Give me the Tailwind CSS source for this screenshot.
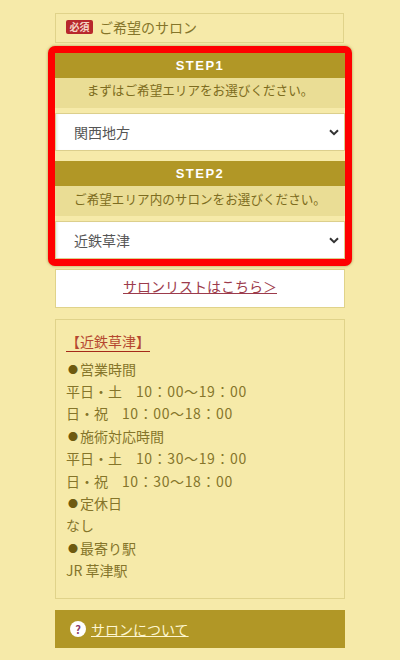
<!DOCTYPE html>
<html lang="ja">
  <head>
    <meta charset="UTF-8" />
    <title>サロン</title>
    <script src="https://cdn.jsdelivr.net/npm/@tailwindcss/browser@4"></script>
  </head>
  <body class="bg-[#f6eaa9] h-[660px] overflow-hidden font-['Noto_Sans_CJK_JP',sans-serif] text-[14px] text-[#85752a]">
    <div class="w-[290px] ml-[55px] pt-[13px]">
      <!-- 見出し -->
      <div class="flex items-center h-[30px] w-[289px] pl-[10px] pb-[2px] border border-[#e0d38a]">
        <span class="flex items-center justify-center w-[27px] h-[14px] rounded-[2px] bg-[#b8282c] text-[#f5d5c5] text-[10px] font-bold leading-none">必須</span>
        <span class="ml-[6px] text-[14px]">ご希望のサロン</span>
      </div>

      <!-- STEP -->
      <div class="-mx-[7px] mt-[3px] w-[304px] border-[7px] border-[#ff0000] rounded-[7px] bg-[#f6eaa9] shadow-[0_0_3px_rgba(120,100,20,0.6)]">
        <div class="h-[25px] bg-[#b19726] text-center text-white font-bold text-[13px] leading-[25px] tracking-[1.5px] font-['Liberation_Sans',sans-serif]">STEP1</div>
        <div class="h-[30px] bg-[#eadd95] text-center text-[12.6px] text-[#7d6c20] leading-[24px]">まずはご希望エリアをお選びください。</div>
        <div class="mt-[5px] flex items-center justify-between h-[38px] bg-white border border-[#dccf8c] pl-[18px] pr-[5px] text-[#555] shadow-[inset_3px_0_3px_-2px_rgba(0,0,0,0.12)]">
          <span>関西地方</span>
          <svg width="10" height="7" viewBox="0 0 10 7"><path d="M1 1.2l4 4 4-4" fill="none" stroke="#333" stroke-width="2" /></svg>
        </div>
        <div class="mt-[10px] h-[25px] bg-[#b19726] text-center text-white font-bold text-[13px] leading-[25px] tracking-[1.5px] font-['Liberation_Sans',sans-serif]">STEP2</div>
        <div class="h-[30px] bg-[#eadd95] text-center text-[12.6px] text-[#7d6c20] leading-[26px]">ご希望エリア内のサロンをお選びください。</div>
        <div class="mt-[5px] flex items-center justify-between h-[38px] bg-white border border-[#dccf8c] pl-[18px] pr-[5px] text-[#555] shadow-[inset_3px_0_3px_-2px_rgba(0,0,0,0.12)]">
          <span>近鉄草津</span>
          <svg width="10" height="7" viewBox="0 0 10 7"><path d="M1 1.2l4 4 4-4" fill="none" stroke="#333" stroke-width="2" /></svg>
        </div>
      </div>

      <!-- サロンリスト -->
      <div class="mt-[3px] h-[39px] bg-white border border-[#e0d38a] text-center leading-[33px] text-[#9c3b4c]">
        <a href="#" class="underline">サロンリストはこちら＞</a>
      </div>

      <!-- サロン情報 -->
      <div class="mt-[11px] h-[280px] border border-[#e0d38a] px-[10px] pt-[11px]">
        <p class="inline-block border-b border-[#a52a1a] text-[#b5472f] leading-[20px]">【近鉄草津】</p>
        <div class="mt-[6px] grid auto-rows-[22.4px] items-center">
          <p class="flex items-center"><span class="w-[14px] text-center text-[10px] text-[#6e5a10]">●</span>営業時間</p>
          <p>平日・土　<span class="tracking-[0.6px]">10：00～19：00</span></p>
          <p>日・祝　<span class="tracking-[0.6px]">10：00～18：00</span></p>
          <p class="flex items-center"><span class="w-[14px] text-center text-[10px] text-[#6e5a10]">●</span>施術対応時間</p>
          <p>平日・土　<span class="tracking-[0.6px]">10：30～19：00</span></p>
          <p>日・祝　<span class="tracking-[0.6px]">10：30～18：00</span></p>
          <p class="flex items-center"><span class="w-[14px] text-center text-[10px] text-[#6e5a10]">●</span>定休日</p>
          <p>なし</p>
          <p class="flex items-center"><span class="w-[14px] text-center text-[10px] text-[#6e5a10]">●</span>最寄り駅</p>
          <p>JR 草津駅</p>
        </div>
      </div>

      <!-- サロンについて -->
      <div class="mt-[11px] flex items-center h-[38px] bg-[#b19726] pl-[15px] text-white">
        <span class="flex items-center justify-center w-[16px] h-[16px] rounded-full bg-white text-[#8a3a6a] text-[11px] font-bold leading-none">?</span>
        <a href="#" class="ml-[5px] underline text-[#fdf6d0]">サロンについて</a>
      </div>
    </div>
  </body>
</html>
